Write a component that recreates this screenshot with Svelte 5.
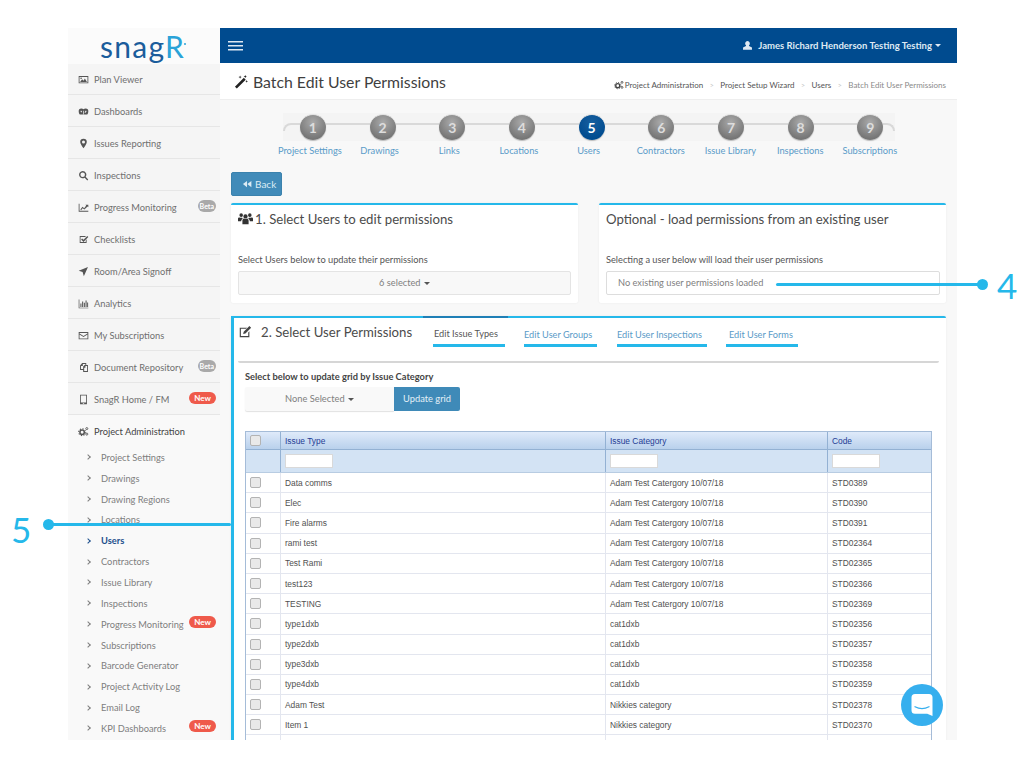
<script>
	const icons = {
		plan: 'M1 3h14v10.500H1zM2.200 4.200v8h11.600v-8zM3 11.500l3-4 2 2.200 2-3.200 3 5zM4.500 5a1.200 1.200 0 1 1 0 2.400 1.200 1.200 0 0 1 0-2.400z',
		dash: 'M5 3.500a4.200 4.200 0 0 0-4 4.500c0 1.700.6 3.200 1.500 4.500h11c.9-1.300 1.500-2.800 1.500-4.500a4.200 4.200 0 0 0-4-4.500c-1.200 0-2.200.5-3 1.200-.8-.7-1.800-1.200-3-1.200zM4.500 6.500l-1 1 1.500 2 1-1zM11.500 6.500l-2 2.500 1 1 2-2.500zM7.500 7h1v5h-1z',
		pin: 'M8 1a4.800 4.800 0 0 0-4.800 4.800c0 3 3.300 6.700 4.800 9.200 1.500-2.500 4.800-6.200 4.800-9.200A4.800 4.800 0 0 0 8 1zm0 2.600a2.200 2.200 0 1 1 0 4.400 2.200 2.200 0 0 1 0-4.400z',
		search: 'M6.800 1.500a5.300 5.300 0 0 1 4.300 8.400l3.800 3.800-1.400 1.400-3.800-3.800A5.300 5.300 0 1 1 6.800 1.500zm0 2a3.300 3.300 0 1 0 0 6.600 3.300 3.300 0 0 0 0-6.600z',
		chart: 'M1 2.500h1.200V12.800H15V14H1zM3.500 11l3-4 2.500 2 3-4-1.300-1H15v3.800l-1.100-1.200L9.300 11 6.800 9l-2.300 3z',
		check: 'M2.500 3H11v1.200H3.700v7.600h7.600V9l1.200-1.200V13h-10zM6 6.500l2 2L13.500 3l1.500 1.500-7 7-3.500-3.500z',
		send: 'M14.500 1.500 8.500 15l-1.800-6.200L1 7z',
		bars: 'M1 2h1v12h13v1H1zM3.500 8h1.500v5H3.500zM6 5h1.500v8H6zM8.500 7H10v6H8.500zM11 3.500h1.500V13H11zM13.300 6.500h1.400V13h-1.400z',
		mail: 'M1 3h14v10.500H1zM2.200 4.200v.9L8 8.800l5.800-3.700v-.9zm0 2.300v5.800h11.600V6.500L8 10.300z',
		docs: 'M6 1.500h6v3h2.500v10h-7v-3H3V5zM7 3v2.800H4.400v4.300h3.100V6.500L9.500 4.500h1.200V3zM9 8.400v4.800h4.200V5.800h-2.400v2.600z',
		tablet: 'M3 1h10v14H3zM4.200 2.200v10h7.600v-10zM7 13h2v1.200H7z',
		wand: 'M1 13.500 10.500 4l2 2L3 15.500zM12 1l.5 1.200L13.700 2.700 12.500 3.200 12 4.400 11.500 3.200 10.300 2.700 11.500 2.200zM6.500 1.500 7 2.800l1.300.5-1.300.5-.5 1.300-.5-1.300-1.300-.5L6 2.800zM13.500 6.500l.4 1 1 .4-1 .4-.4 1-.4-1-1-.4 1-.4z',
		users: 'M8 3.500a2.300 2.300 0 1 1 0 4.600 2.300 2.300 0 0 1 0-4.600zM3.400 2.500a1.900 1.900 0 1 1 0 3.800 1.900 1.900 0 0 1 0-3.800zM12.600 2.500a1.900 1.900 0 1 1 0 3.800 1.900 1.900 0 0 1 0-3.800zM4.700 14v-3.500c0-1.200.6-2.100 1.600-2.500.5.300 1 .5 1.700.5s1.200-.2 1.700-.5c1 .4 1.600 1.300 1.600 2.500V14zM0 11V8.300c0-1 .6-1.500 1.500-1.500.5.300 1.200.5 2 .5.300 0 .6 0 .9-.1.100.400.400.800.700 1.100-.9.500-1.500 1.200-1.700 2.200v.5zM16 11V8.300c0-1-.6-1.500-1.500-1.500-.5.300-1.200.5-2 .5-.3 0-.6 0-.9-.1-.1.400-.4.800-.7 1.100.9.500 1.500 1.200 1.700 2.200v.5z',
		edit: 'M2 3h8.500L9 4.300H3.300v8.400h8.400V8.500L13 7.200V14H2zM13 1.200l2 2L8.500 9.800l-2.600.6.600-2.600z',
		back: 'M8 3v10L1.500 8zM15 3v10L8.500 8z',
		user: 'M8 1.500a3.500 3.500 0 0 1 2.200 6.200v1.100L14.500 11v3h-13v-3l4.300-2.200V7.700A3.500 3.500 0 0 1 8 1.500z'
	};

	const mainNav = [
		{ icon: 'plan', label: 'Plan Viewer' },
		{ icon: 'dash', label: 'Dashboards' },
		{ icon: 'pin', label: 'Issues Reporting' },
		{ icon: 'search', label: 'Inspections' },
		{ icon: 'chart', label: 'Progress Monitoring', badge: 'Beta' },
		{ icon: 'check', label: 'Checklists' },
		{ icon: 'send', label: 'Room/Area Signoff' },
		{ icon: 'bars', label: 'Analytics' },
		{ icon: 'mail', label: 'My Subscriptions' },
		{ icon: 'docs', label: 'Document Repository', badge: 'Beta' },
		{ icon: 'tablet', label: 'SnagR Home / FM', badge: 'New' }
	];

	const subNav = [
		{ label: 'Project Settings' },
		{ label: 'Drawings' },
		{ label: 'Drawing Regions' },
		{ label: 'Locations' },
		{ label: 'Users', active: true },
		{ label: 'Contractors' },
		{ label: 'Issue Library' },
		{ label: 'Inspections' },
		{ label: 'Progress Monitoring', badge: 'New' },
		{ label: 'Subscriptions' },
		{ label: 'Barcode Generator' },
		{ label: 'Project Activity Log' },
		{ label: 'Email Log' },
		{ label: 'KPI Dashboards', badge: 'New' }
	];

	const steps = ['Project Settings', 'Drawings', 'Links', 'Locations', 'Users', 'Contractors', 'Issue Library', 'Inspections', 'Subscriptions'];
	const tabs = ['Edit Issue Types', 'Edit User Groups', 'Edit User Inspections', 'Edit User Forms'];

	const adam = 'Adam Test Catergory 10/07/18';
	const rows = [
		['Data comms', adam, 'STD0389'],
		['Elec', adam, 'STD0390'],
		['Fire alarms', adam, 'STD0391'],
		['rami test', adam, 'STD02364'],
		['Test Rami', adam, 'STD02365'],
		['test123', adam, 'STD02366'],
		['TESTING', adam, 'STD02369'],
		['type1dxb', 'cat1dxb', 'STD02356'],
		['type2dxb', 'cat1dxb', 'STD02357'],
		['type3dxb', 'cat1dxb', 'STD02358'],
		['type4dxb', 'cat1dxb', 'STD02359'],
		['Adam Test', 'Nikkies category', 'STD02378'],
		['Item 1', 'Nikkies category', 'STD02370'],
		['', '', '']
	];
</script>

{#snippet icon(name, cls = '')}
	<svg class="icon {cls}" viewBox="0 0 16 16" aria-hidden="true"><path fill-rule="evenodd" d={icons[name]} /></svg>
{/snippet}

{#snippet cogs(cls = '')}
	<svg class="icon {cls}" viewBox="0 0 16 16" aria-hidden="true">
		<circle cx="6" cy="9" r="3.200" fill="none" stroke="currentColor" stroke-width="2.200" />
		<circle cx="6" cy="9" r="5" fill="none" stroke="currentColor" stroke-width="1.500" stroke-dasharray="1.800 2.100" />
		<circle cx="12.800" cy="3.800" r="1.500" fill="none" stroke="currentColor" stroke-width="1.300" />
		<circle cx="12.800" cy="11.800" r="1.500" fill="none" stroke="currentColor" stroke-width="1.300" />
	</svg>
{/snippet}

<div class="page">
	<div class="shell">
		<aside class="sidebar">
			<div class="logo">snag<span class="logo-r">R</span><span class="logo-dot"></span></div>
			<nav>
				{#each mainNav as item}
					<div class="nav-item">
						{@render icon(item.icon, 'nav-icon')}
						<span>{item.label}</span>
						{#if item.badge}<em class="badge {item.badge.toLowerCase()}">{item.badge}</em>{/if}
					</div>
				{/each}
				<div class="nav-item open">
					{@render cogs('nav-icon')}
					<span>Project Administration</span>
				</div>
				<div class="sub-list">
					{#each subNav as item}
						<div class="sub-item" class:active={item.active}>
							<i class="chev"></i>
							<span>{item.label}</span>
							{#if item.badge}<em class="badge new">{item.badge}</em>{/if}
						</div>
					{/each}
				</div>
			</nav>
		</aside>

		<div class="main">
			<header class="topbar">
				<div class="burger"><i></i><i></i><i></i></div>
				<div class="account">
					{@render icon('user', 'user-icon')}
					<span>James Richard Henderson Testing Testing</span>
					<i class="caret"></i>
				</div>
			</header>

			<div class="titlebar">
				<h1>{@render icon('wand', 'title-icon')}Batch Edit User Permissions</h1>
				<div class="crumbs">
					{@render cogs('crumb-icon')}
					<span>Project Administration</span><b>&gt;</b>
					<span>Project Setup Wizard</span><b>&gt;</b>
					<span>Users</span><b>&gt;</b>
					<span class="current">Batch Edit User Permissions</span>
				</div>
			</div>

			<div class="content">
				<div class="stepper">
					{#each steps as step, i}
						<div class="step" class:active={step === 'Users'}>
							<div class="ball">{i + 1}</div>
							<div class="step-label">{step}</div>
						</div>
					{/each}
				</div>

				<button class="back">{@render icon('back', 'back-icon')}Back</button>

				<div class="panel-row">
					<section class="panel">
						<h2>{@render icon('users', 'users-icon')}1. Select Users to edit permissions</h2>
						<label>Select Users below to update their permissions</label>
						<div class="select grey">6 selected <i class="caret dark"></i></div>
					</section>
					<section class="panel">
						<h2>Optional - load permissions from an existing user</h2>
						<label>Selecting a user below will load their user permissions</label>
						<div class="select plain">No existing user permissions loaded</div>
					</section>
				</div>

				<section class="panel wide">
					<div class="tab-head">
						<h2>{@render icon('edit', 'edit-icon')}2. Select User Permissions</h2>
						<div class="tabs">
							{#each tabs as tab, i}
								<div class="tab" class:current={i === 0}><span>{tab}</span></div>
							{/each}
						</div>
					</div>

					<div class="filter">
						<div class="filter-title">Select below to update grid by Issue Category</div>
						<div class="filter-controls">
							<div class="none">None Selected <i class="caret dark"></i></div>
							<div class="update">Update grid</div>
						</div>
					</div>

					<div class="grid">
						<div class="row head">
							<div class="cell box"><i class="tick"></i></div>
							<div class="cell">Issue Type</div>
							<div class="cell">Issue Category</div>
							<div class="cell">Code</div>
						</div>
						<div class="row search">
							<div class="cell box"></div>
							<div class="cell"><i class="field"></i></div>
							<div class="cell"><i class="field"></i></div>
							<div class="cell"><i class="field"></i></div>
						</div>
						{#each rows as row}
							<div class="row body">
								<div class="cell box"><i class="tick"></i></div>
								<div class="cell">{row[0]}</div>
								<div class="cell">{row[1]}</div>
								<div class="cell">{row[2]}</div>
							</div>
						{/each}
					</div>
				</section>
			</div>
		</div>
	</div>

	<div class="note-line four"><i></i></div>
	<div class="note-num n4">4</div>
	<div class="note-line five"><i></i></div>
	<div class="note-rail"></div>
	<div class="note-num n5">5</div>

	<div class="chat">
		<svg viewBox="0 0 24 24" aria-hidden="true">
			<path d="M3 5.500A3 3 0 0 1 6 2.500h12a3 3 0 0 1 3 3v16l-4.500-2H6a3 3 0 0 1-3-3z" fill="#fff" />
			<path d="M6 13.500c3.800 2 8.200 2 12 0" fill="none" stroke="#36afee" stroke-width="1.100" stroke-linecap="round" />
		</svg>
	</div>
</div>

<style>
	:global(body) {
		background: #fff;
		font-family: 'Lato', 'Open Sans', sans-serif;
	}

	.page {
		position: relative;
		width: 1024px;
		height: 768px;
		overflow: hidden;
		padding: 28px 0 0 68px;
		box-sizing: border-box;
	}

	.shell {
		display: flex;
		width: 889px;
		height: 712px;
		overflow: hidden;
	}

	.icon {
		display: inline-block;
		fill: currentColor;
		flex: none;
	}

	/* sidebar */
	.sidebar {
		width: 152px;
		flex: none;
		background: #f9f9f9;
		color: #6f6f6f;
		font-size: 9.300px;
	}

	.logo {
		position: relative;
		height: 36px;
		margin-bottom: -2px;
		line-height: 36px;
		text-align: center;
		font-size: 30px;
		letter-spacing: 1.300px;
		color: #1b5d9c;
		background: #fbfbfb;
		padding-right: 3px;
		box-sizing: border-box;
	}

	.logo-r {
		color: #2aa3d8;
	}

	.logo-dot {
		position: absolute;
		left: 116px;
		top: 15px;
		width: 2px;
		height: 2px;
		border-radius: 50%;
		background: #2aa3d8;
	}

	nav {
		border-top: 1px solid #e9e9e9;
	}

	.nav-item {
		display: flex;
		align-items: center;
		height: 32px;
		padding: 2px 4px 0 10px;
		box-sizing: border-box;
		background: #f5f5f5;
		border-bottom: 1px solid #e6e6e6;
	}

	.nav-item.open {
		background: #f9f9f9;
		border-bottom: 0;
		height: 32px;
		padding-top: 0;
		color: #444;
	}

	.nav-item span,
	.sub-item span {
		flex: 1;
		white-space: nowrap;
	}

	.nav-icon {
		width: 11px;
		height: 11px;
		margin-right: 5px;
		color: #555;
	}

	.badge {
		font-style: normal;
		font-size: 8px;
		font-weight: 700;
		color: #fff;
		line-height: 12px;
		padding: 0 5px;
		border-radius: 7px;
		margin-top: -4px;
	}

	.badge.beta {
		background: #a9a9a9;
		font-size: 7px;
		padding: 0 2px;
	}

	.badge.new {
		background: #ef5a4b;
	}

	.sub-item {
		display: flex;
		align-items: center;
		height: 20.850px;
		padding: 0 4px 0 18px;
		box-sizing: border-box;
		color: #7e7e7e;
	}

	.sub-item.active {
		color: #1d4f8c;
		font-weight: 700;
	}

	.chev {
		width: 3px;
		height: 3px;
		border-top: 1px solid currentColor;
		border-right: 1px solid currentColor;
		transform: rotate(45deg);
		margin-right: 11px;
		flex: none;
	}

	/* top */
	.main {
		flex: 1;
		min-width: 0;
		display: flex;
		flex-direction: column;
		background: #f8f8f8;
	}

	.topbar {
		height: 35px;
		flex: none;
		background: #004b8f;
		color: #dfe9f3;
		display: flex;
		align-items: center;
		justify-content: space-between;
		padding: 0 16px 0 8px;
	}

	.burger {
		display: flex;
		flex-direction: column;
		gap: 3px;
		width: 15px;
	}

	.burger i {
		height: 1px;
		background: #dfe9f3;
		box-shadow: 0 0.500px 0 #dfe9f3;
	}

	.account {
		display: flex;
		align-items: center;
		font-size: 9.500px;
		font-weight: 700;
	}

	.user-icon {
		width: 11px;
		height: 11px;
		margin-right: 5px;
	}

	.caret {
		display: inline-block;
		width: 0;
		height: 0;
		border: 3px solid transparent;
		border-top-color: #dfe9f3;
		border-bottom: 0;
		margin-left: 3px;
		vertical-align: middle;
	}

	.caret.dark {
		border-top-color: #555;
		margin-left: 1px;
	}

	.titlebar {
		height: 37px;
		flex: none;
		background: #fff;
		border-bottom: 1px solid #eeeeee;
		display: flex;
		align-items: center;
		justify-content: space-between;
		padding: 0 11px 0 14px;
		box-sizing: border-box;
	}

	h1 {
		display: flex;
		align-items: center;
		margin: 0;
		font-size: 15.800px;
		font-weight: 400;
		color: #3f3f3f;
	}

	.title-icon {
		width: 15px;
		height: 15px;
		margin-right: 4px;
		color: #222;
	}

	.crumbs {
		display: flex;
		align-items: center;
		margin-top: 8px;
		font-size: 8px;
		color: #555;
	}

	.crumbs b {
		font-weight: 400;
		color: #c4c4c4;
		margin: 0 6.500px;
		font-size: 7px;
	}

	.crumbs .current {
		color: #8a8a8a;
	}

	.crumb-icon {
		width: 10px;
		height: 10px;
		margin-right: 1px;
		color: #444;
	}

	.content {
		flex: 1;
		padding: 14px 11px 0 11px;
		min-height: 0;
	}

	/* stepper */
	.stepper {
		position: relative;
		isolation: isolate;
		display: grid;
		grid-template-columns: repeat(9, 69.700px);
		margin-left: 44px;
		height: 58px;
	}

	.stepper::before {
		content: '';
		position: absolute;
		z-index: -1;
		left: 8px;
		top: 9px;
		width: 612px;
		height: 8px;
		border: 2px solid #d9d9d9;
		border-bottom: 0;
		border-radius: 8px 8px 0 0;
		box-sizing: border-box;
	}

	.stepper::after {
		content: '';
		position: absolute;
		z-index: -2;
		left: 8px;
		top: -1px;
		width: 612px;
		height: 28px;
		background: #f4f4f4;
	}

	.step {
		position: relative;
		display: flex;
		flex-direction: column;
		align-items: center;
	}

	.ball {
		width: 26px;
		height: 26px;
		margin-left: 6px;
		border-radius: 50%;
		background: radial-gradient(circle at 50% 30%, #aaaaaa, #757575 75%);
		border-top: 1px solid #e2e2e2;
		box-sizing: border-box;
		box-shadow: 0 1px 1px #bbb;
		color: #dddddd;
		font-size: 14px;
		font-weight: 700;
		text-align: center;
		line-height: 25px;
	}

	.step.active .ball {
		background: radial-gradient(circle at 50% 30%, #175f9f, #004b8f 75%);
		color: #fff;
	}

	.step-label {
		margin-top: 5px;
		font-size: 9.300px;
		color: #5a9bc8;
		white-space: nowrap;
	}

	.step:nth-child(n + 6) .step-label {
		margin-left: 5px;
	}

	.back {
		display: flex;
		align-items: center;
		width: 51px;
		height: 24px;
		padding: 0 0 0 10px;
		border: 1px solid #3b82ad;
		border-radius: 2px;
		background: #418bb9;
		color: #dcebf4;
		font: 10px 'Lato', sans-serif;
	}

	.back-icon {
		width: 10px;
		height: 10px;
		margin-right: 3px;
	}

	/* panels */
	.panel-row {
		display: flex;
		justify-content: space-between;
		margin-top: 7px;
	}

	.panel {
		width: 347px;
		height: 100px;
		box-sizing: border-box;
		background: #fff;
		border-top: 2px solid #25b8ea;
		border-radius: 2px;
		box-shadow: 0 0 2px #e8e8e8;
		padding: 0 7px;
	}

	h2 {
		display: flex;
		align-items: center;
		height: 27px;
		margin: 0;
		font-size: 13.200px;
		font-weight: 400;
		color: #4b4b4b;
	}

	.users-icon {
		width: 15px;
		height: 15px;
		margin-right: 2px;
		color: #333;
	}

	.panel label {
		display: block;
		margin-top: 21px;
		font-size: 9.250px;
		color: #555;
		line-height: 13px;
	}

	.select {
		height: 24px;
		margin-top: 5px;
		border-radius: 2px;
		box-sizing: border-box;
		font-size: 9.250px;
		line-height: 22px;
		color: #808080;
		border: 1px solid #e4e4e4;
	}

	.select.grey {
		background: #f8f8f8;
		text-align: center;
	}

	.select.plain {
		background: #fff;
		border-color: #ddd;
		padding-left: 11px;
		width: 334px;
	}

	.panel.wide {
		width: 715px;
		height: 440px;
		margin-top: 13px;
		padding: 0 7px 0 7px;
		border-radius: 2px 2px 0 0;
	}

	.tab-head {
		display: flex;
		height: 43px;
		border-bottom: 2px solid #d6d6d6;
		border-radius: 2px;
	}

	.panel.wide h2 {
		height: 28px;
		width: 185px;
		flex: none;
	}

	.edit-icon {
		width: 14px;
		height: 14px;
		margin-right: 9px;
		color: #444;
	}

	.tabs {
		display: flex;
	}

	.tab {
		position: relative;
		height: 33px;
		font-size: 9.200px;
		line-height: 34px;
		color: #5a9bc8;
		white-space: nowrap;
		box-sizing: border-box;
	}

	.tab:nth-child(2) {
		margin-left: 16px;
		width: 73px;
	}

	.tab:nth-child(3) {
		margin-left: 20px;
		width: 90px;
	}

	.tab:nth-child(4) {
		margin-left: 19px;
		width: 72px;
		padding-left: 3px;
	}

	.tab.current {
		color: #555;
		width: 85px;
		padding-left: 11px;
		margin-top: -2px;
		height: 35px;
		border-top: 2px solid #1f7fb6;
		line-height: 32px;
		background: #fff;
	}

	.tab::after {
		content: '';
		position: absolute;
		left: 0;
		right: 0;
		top: 26px;
		height: 3px;
		background: #25b8ea;
	}

	.tab.current::after {
		left: 10px;
		right: 3px;
		top: 26px;
	}

	.filter {
		padding: 8px 7px 0;
	}

	.filter-title {
		font-size: 9.300px;
		font-weight: 700;
		line-height: 12px;
		color: #444;
	}

	.filter-controls {
		display: flex;
		height: 24px;
		margin-top: 4px;
		font-size: 9.300px;
		line-height: 24px;
		text-align: center;
	}

	.none {
		width: 149px;
		background: #f9f9f9;
		color: #808080;
		border-radius: 2px 0 0 2px;
		box-shadow: 0 1px 1px #e2e2e2;
	}

	.update {
		width: 66px;
		background: #3f8ab8;
		color: #e4f0f7;
		border-radius: 0 2px 2px 0;
	}

	/* issue grid */
	.grid {
		margin: 20px 7px 0;
		border: 1px solid #a5bcd8;
		border-bottom: 0;
		font-family: 'Liberation Sans', Arial, sans-serif;
		font-size: 8.400px;
		color: #505050;
	}

	.row {
		display: grid;
		grid-template-columns: 34px 325px 222px 1fr;
		box-sizing: border-box;
	}

	.row.head {
		height: 18px;
		background: linear-gradient(#dfeafa, #b9d1ec);
		border-bottom: 1px solid #93b1d3;
		color: #1f3c94;
	}

	.row.search {
		height: 23px;
		background: #d3e3f4;
		border-bottom: 1px solid #b8cce2;
	}

	.row.body {
		height: 20.200px;
		border-bottom: 1px solid #e3e6ef;
	}

	.cell {
		display: flex;
		align-items: center;
		padding-left: 4px;
		border-left: 1px solid #e3e6ef;
		min-width: 0;
		white-space: nowrap;
	}

	.cell.box {
		border-left: 0;
	}

	.head .cell,
	.search .cell {
		border-left-color: #93b1d3;
	}

	.tick {
		width: 9px;
		height: 9px;
		border: 1px solid #b3b3b3;
		border-radius: 2px;
		background: #e9e9e9;
	}

	.field {
		width: 48px;
		height: 14px;
		background: #fff;
		border: 1px solid #d9d9d9;
		box-sizing: border-box;
	}

	/* annotations */
	.note-line {
		position: absolute;
		height: 3px;
		background: #25b8ea;
		border-radius: 2px;
	}

	.note-line i {
		position: absolute;
		top: -4px;
		width: 11px;
		height: 11px;
		border-radius: 50%;
		background: #25b8ea;
	}

	.note-line.four {
		left: 776px;
		top: 283px;
		width: 208px;
	}

	.note-line.four i {
		right: -4px;
	}

	.note-line.five {
		left: 47px;
		top: 523px;
		width: 184px;
	}

	.note-line.five i {
		left: -4px;
	}

	.note-rail {
		position: absolute;
		left: 231px;
		top: 316px;
		width: 3px;
		height: 424px;
		background: #25b8ea;
	}

	.note-num {
		position: absolute;
		font-size: 35px;
		font-weight: 400;
		line-height: 36px;
		color: #25b8ea;
	}

	.n4 {
		left: 997px;
		top: 267px;
	}

	.n5 {
		left: 11px;
		top: 511px;
	}

	.chat {
		position: absolute;
		left: 901px;
		top: 684px;
		width: 42px;
		height: 42px;
		border-radius: 50%;
		background: #36afee;
		display: flex;
		align-items: center;
		justify-content: center;
	}

	.chat svg {
		width: 28px;
		height: 28px;
	}
</style>
